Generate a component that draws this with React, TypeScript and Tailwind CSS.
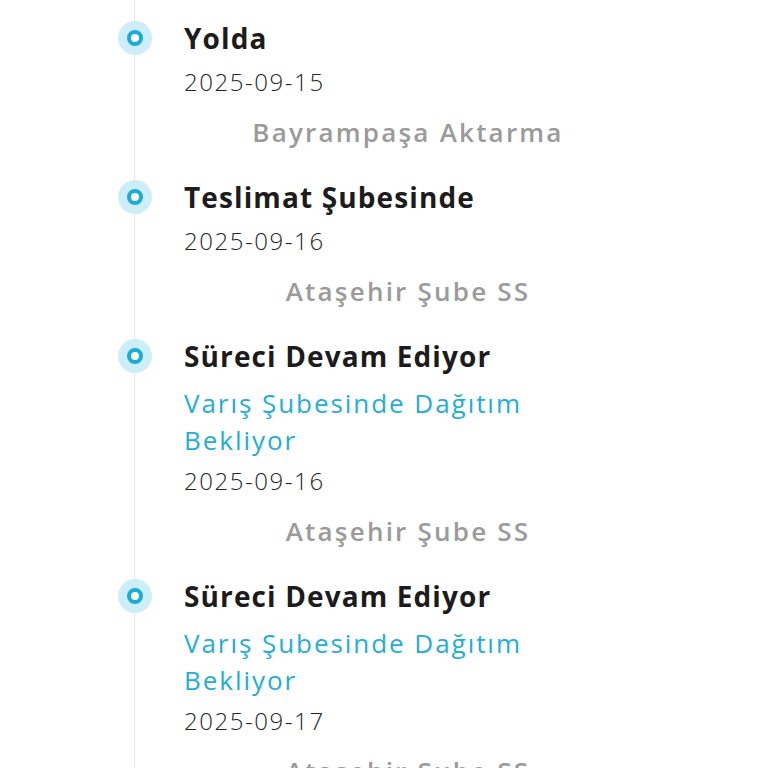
import React from 'react'

interface Step {
  title: string
  note?: string
  date: string
  place: string
}

const steps: Step[] = [
  { title: 'Yolda', date: '2025-09-15', place: 'Bayrampaşa Aktarma' },
  { title: 'Teslimat Şubesinde', date: '2025-09-16', place: 'Ataşehir Şube SS' },
  {
    title: 'Süreci Devam Ediyor',
    note: 'Varış Şubesinde Dağıtım Bekliyor',
    date: '2025-09-16',
    place: 'Ataşehir Şube SS',
  },
  {
    title: 'Süreci Devam Ediyor',
    note: 'Varış Şubesinde Dağıtım Bekliyor',
    date: '2025-09-17',
    place: 'Ataşehir Şube SS',
  },
]

const Dot: React.FC = () => (
  <div className="absolute -left-[17px] top-[3px] flex h-[34px] w-[34px] items-center justify-center rounded-full bg-[#cdeef8]">
    <div className="h-[16px] w-[16px] rounded-full border-[4px] border-[#19acd6] bg-white" />
  </div>
)

const App: React.FC = () => {
  return (
    <div
      className="h-[768px] w-[768px] overflow-hidden bg-white"
      style={{ fontFamily: '"Open Sans", "Noto Sans", sans-serif' }}
    >
      <div className="ml-[134px] flex min-h-[800px] flex-col gap-[27px] border-l border-[#e4e4e4] pt-[18px]">
        {steps.map((s, i) => (
          <div key={i} className="relative pl-[49px]">
            <Dot />
            <div className="w-[448px]">
              <h3 className="text-[28px] font-bold leading-[40px] tracking-[0.04em] text-[#1c1c1c]">
                {s.title}
              </h3>
              {s.note && (
                <p className="mt-[9px] w-[380px] text-[26px] leading-[37px] tracking-[0.075em] text-[#21aed8]">
                  {s.note}
                </p>
              )}
              <p
                className={`${s.note ? 'mt-[4px]' : 'mt-[6px]'} text-[24px] font-light leading-[36px] tracking-[0.065em] text-[#262626]`}
              >
                {s.date}
              </p>
              <p className="mt-[14px] text-center text-[26px] font-semibold leading-[36px] tracking-[0.085em] text-[#9a9a9a]">
                {s.place}
              </p>
            </div>
          </div>
        ))}
      </div>
    </div>
  )
}

export default App
